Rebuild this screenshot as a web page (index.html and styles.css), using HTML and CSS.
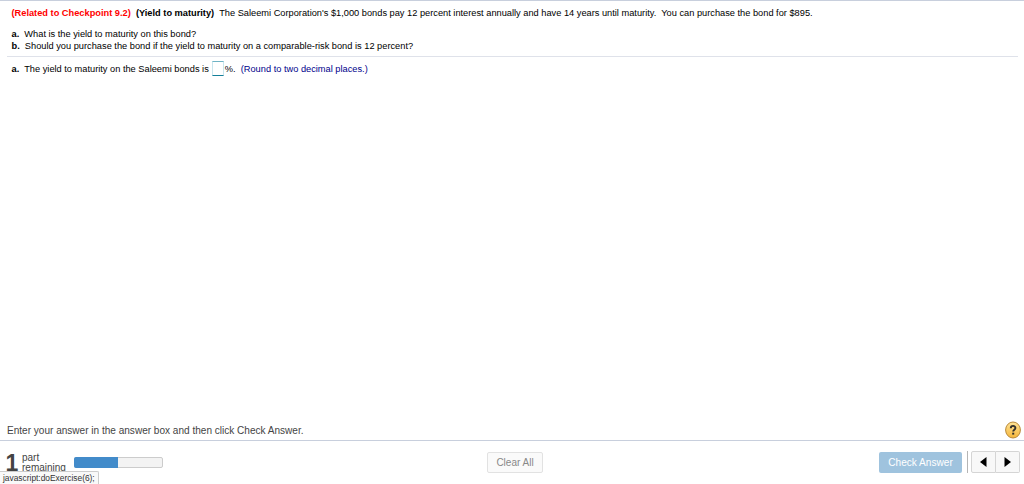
FILE: index.html
```html
<!DOCTYPE html>
<html lang="en">
<head>
  <meta charset="UTF-8">
  <title>Exercise</title>
  <link rel="stylesheet" href="styles.css">
</head>
<body>

<div class="player">
  <!-- Question -->
  <div class="question">
    <div class="intro"><b class="related">(Related to Checkpoint 9.2)</b>&nbsp; <b class="topic">(Yield to maturity)</b>&nbsp; The Saleemi Corporation's $1,000 bonds pay 12 percent interest annually and have 14 years until maturity.&nbsp; You can purchase the bond for $895.</div>
    <div class="parts">
      <div><b>a.</b>&nbsp; What is the yield to maturity on this bond?</div>
      <div><b>b.</b>&nbsp; Should you purchase the bond if the yield to maturity on a comparable-risk bond is 12 percent?</div>
    </div>
    <div class="answer">
      <span><b>a.</b>&nbsp; The yield to maturity on the Saleemi bonds is</span>
      <input class="answer-box" type="text" aria-label="Answer">
      <span>%.&nbsp; <span class="hint">(Round to two decimal places.)</span></span>
    </div>
  </div>

  <!-- Instruction line -->
  <div class="instruction">
    <span>Enter your answer in the answer box and then click Check Answer.</span>
    <svg class="help" width="16" height="18" viewBox="0 0 16 18">
      <defs>
        <linearGradient id="gold" x1="0" y1="0" x2="0" y2="1">
          <stop offset="0" stop-color="#ffe396"/>
          <stop offset="1" stop-color="#f5b63a"/>
        </linearGradient>
      </defs>
      <ellipse cx="8" cy="9" rx="7.4" ry="8" fill="url(#gold)" stroke="#b98a3c"/>
      <path d="M5.8 7.2C5.8 4.2 10.4 4.2 10.4 7C10.4 8.8 8.2 8.7 8.2 10.6" fill="none" stroke="#33302b" stroke-width="1.9"/>
      <rect x="7.2" y="11.7" width="2" height="1.9" fill="#33302b"/>
    </svg>
  </div>

  <!-- Footer -->
  <div class="footer">
    <div class="progress">
      <span class="count">1</span>
      <span class="remaining">part<br>remaining</span>
      <div class="bar"><div class="fill"></div></div>
    </div>
    <button class="clear">Clear All</button>
    <div class="actions">
      <button class="check">Check Answer</button>
      <div class="nav">
        <button aria-label="Previous"><svg width="7" height="10" viewBox="0 0 7 10"><path d="M6.5 0V10L0 5Z"/></svg></button>
        <button aria-label="Next"><svg width="7" height="10" viewBox="0 0 7 10"><path d="M.5 0V10L7 5Z"/></svg></button>
      </div>
    </div>
  </div>
</div>

<div class="status">javascript:doExercise(6);</div>

</body>
</html>
```
FILE: styles.css
```css
body {
  margin: 0;
  background: #fff;
  color: #000;
  font-family: "Liberation Sans", Arial, sans-serif;
  font-size: 9.255px;
}
button {
  box-sizing: border-box;
  padding: 0;
  font-family: inherit;
}
.player {
  display: flex;
  flex-direction: column;
  box-sizing: border-box;
  height: 484px;
  border-top: 1px solid #c8cfdd;
  overflow: hidden;
}
.question {
  flex: 1;
  padding: 6px 6px 0 7px;
  line-height: 12px;
  white-space: nowrap;
}
.intro {
  padding-left: 4.5px;
}
.related {
  color: #f00;
}
.parts {
  margin-top: 9px;
  padding: 0 0 4px 4.5px;
  border-bottom: 1px solid #dfe2ea;
}
.answer {
  display: flex;
  align-items: center;
  padding: 4px 0 0 4.5px;
}
.answer-box {
  box-sizing: border-box;
  width: 12px;
  height: 15px;
  margin: 0 1px 0 3px;
  padding: 0;
  border: 1px solid #c9e6ee;
  border-top-color: #6fb3c4;
  border-bottom-color: #147f99;
}
.hint {
  color: #00008b;
}
.instruction {
  display: flex;
  align-items: center;
  justify-content: space-between;
  height: 20px;
  padding: 0 3px 0 7px;
  border-bottom: 1px solid #c8cfdd;
  color: #444;
  font-size: 10.05px;
}
.footer {
  display: flex;
  align-items: flex-start;
  justify-content: space-between;
  height: 43px;
  color: #444;
}
.progress {
  display: flex;
  width: 487px;
}
.count {
  width: 16.5px;
  margin: 14px 0 0 5.5px;
  font-size: 23px;
  font-weight: bold;
  line-height: 16px;
}
.remaining {
  width: 52px;
  margin-top: 12px;
  font-size: 10px;
  line-height: 10px;
}
.bar {
  box-sizing: border-box;
  width: 89px;
  height: 11px;
  margin-top: 16px;
  border: 1px solid #ccc;
  border-radius: 2px;
  background: #f3f3f3;
}
.fill {
  width: 44px;
  height: 11px;
  margin: -1px 0 0 -1px;
  border-radius: 2px 0 0 2px;
  background: #428bca;
}
.clear {
  width: 56px;
  height: 21px;
  margin-top: 11px;
  border: 1px solid #e2e2e2;
  border-radius: 2px;
  background: #fafafa;
  color: #888;
  font-size: 10px;
}
.actions {
  display: flex;
  justify-content: flex-end;
  width: 481px;
  padding-top: 10px;
}
.check {
  width: 83px;
  height: 21px;
  margin: 1px 5px 0 0;
  border: 0;
  border-radius: 2px;
  background: #9fc3de;
  color: #fff;
  font-size: 10.1px;
}
.nav {
  display: flex;
  height: 22px;
  margin-right: 4px;
  padding-left: 3px;
  border-left: 1px solid #b5b5b5;
}
.nav button {
  display: flex;
  align-items: center;
  justify-content: center;
  width: 25px;
  height: 22px;
  border: 1px solid #d5d5d5;
  border-radius: 2px 0 0 2px;
  background: #f8f8f8;
}
.nav button + button {
  width: 24px;
  border-left: 0;
  border-radius: 0 2px 2px 0;
}
/* link preview over the footer */
.status {
  position: absolute;
  left: 0;
  bottom: 0;
  box-sizing: border-box;
  width: 99px;
  height: 13px;
  padding-left: 3px;
  border: 1px solid #ccc;
  border-width: 1px 1px 0 0;
  border-radius: 0 2px 0 0;
  background: #f9f9f9;
  color: #333;
  font-size: 8.4px;
  line-height: 12px;
  white-space: nowrap;
}
```
